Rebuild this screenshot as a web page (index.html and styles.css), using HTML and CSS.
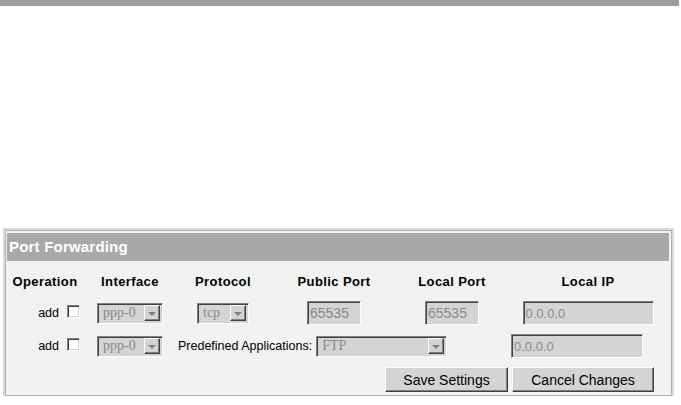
FILE: index.html
```html
<!DOCTYPE html>
<html lang="en">

<head>
  <meta charset="UTF-8" />
  <title>Port Forwarding</title>
  <link rel="stylesheet" href="styles.css">
</head>

<body>
  <div class="topbar"></div>
  <div class="panel">
    <header class="title">Port Forwarding</header>
    <div class="grid">
      <div class="th">Operation</div>
      <div class="th">Interface</div>
      <div class="th">Protocol</div>
      <div class="th">Public Port</div>
      <div class="th">Local Port</div>
      <div class="th">Local IP</div>

      <div class="op">add <span class="check"></span></div>
      <div class="select iface"><span class="val">ppp-0</span><span class="arrow"></span></div>
      <div class="select proto"><span class="val">tcp</span><span class="arrow"></span></div>
      <input class="field port" type="text" value="65535" disabled />
      <input class="field port" type="text" value="65535" disabled />
      <input class="field ip" type="text" value="0.0.0.0" disabled />

      <div class="op">add <span class="check"></span></div>
      <div class="select iface"><span class="val">ppp-0</span><span class="arrow"></span></div>
      <div class="predef">
        <span>Predefined Applications:</span>
        <div class="select app"><span class="val">FTP</span><span class="arrow"></span></div>
      </div>
      <input class="field ip second" type="text" value="0.0.0.0" disabled />
    </div>
    <footer class="actions">
      <button class="save">Save Settings</button>
      <button class="cancel">Cancel Changes</button>
    </footer>
  </div>
</body>

</html>
```

FILE: styles.css
```css
:root {
  /* bar colours */
  --bar-color: #9e9e9e;
  --title-bg: #a9a9a9;
  /* panel */
  --panel-bg: #f2f2f2;
  --panel-line: #b0b0b0;
  --panel-outer: #dadada;
  /* classic 3d controls */
  --face: #d4d4d4;
  --shadow: #808080;
  --dark: #404040;
  --disabled-text: #8a8a8a;
}

body {
  margin: 0;
  background: #fff;
  font-family: "Liberation Sans", Arial, sans-serif;
  color: #000;
}

.topbar {
  height: 6px;
  width: 679px;
  background: var(--bar-color);
}

/* panel */
.panel {
  box-sizing: border-box;
  width: 667px;
  margin: 224px 0 0 5px;
  padding: 2px 2px 3px 1px;
  background: var(--panel-bg);
  border: 1px solid var(--panel-line);
  box-shadow: 0 0 0 2px var(--panel-outer);
}

.panel>.title {
  height: 28px;
  line-height: 28px;
  padding-left: 2px;
  background: var(--title-bg);
  color: #fff;
  font-weight: bold;
  font-size: 15px;
  letter-spacing: 0.2px;
}

.grid {
  display: grid;
  grid-template-columns: 74px 96px 90px 132px 104px 168px;
  grid-template-rows: 18px 24px 24px;
  row-gap: 9px;
  margin-left: 1px;
  padding-top: 13px;
}

.th {
  justify-self: center;
  align-self: start;
  line-height: 16px;
  font-size: 13px;
  font-weight: bold;
  letter-spacing: 0.4px;
}

.op {
  justify-self: end;
  align-self: center;
  display: flex;
  align-items: center;
  gap: 8px;
  margin-right: 2px;
  font-size: 12.5px;
}

.op .check {
  margin-top: -3px;
}

.check {
  box-sizing: border-box;
  width: 13px;
  height: 13px;
  background: #fff;
  border: 1px solid;
  border-color: var(--shadow) #fff #fff var(--shadow);
  box-shadow: inset 1px 1px 0 var(--dark), inset -1px -1px 0 var(--face);
}

/* select boxes */
.select {
  box-sizing: border-box;
  justify-self: center;
  align-self: center;
  display: flex;
  align-items: center;
  height: 21px;
  padding: 2px;
  background: var(--face);
  border: 1px solid;
  border-color: var(--shadow) #fff #fff var(--shadow);
  box-shadow: inset 1px 1px 0 var(--dark);
}

.select .val {
  flex: 1;
  padding-left: 3px;
  font-family: "Liberation Serif", "Times New Roman", serif;
  font-size: 14px;
  color: var(--disabled-text);
}

.select .arrow {
  box-sizing: border-box;
  display: flex;
  align-items: center;
  justify-content: center;
  width: 16px;
  height: 16px;
  background: var(--face);
  border: 1px solid;
  border-color: #fff var(--dark) var(--dark) #fff;
  box-shadow: inset -1px -1px 0 var(--shadow);
}

.select .arrow::after {
  content: "";
  width: 0;
  height: 0;
  margin: 1px 0 0 -1px;
  border-left: 4px solid transparent;
  border-right: 4px solid transparent;
  border-top: 4px solid var(--shadow);
}

.select.iface {
  width: 66px;
}

.select.proto {
  width: 52px;
}

.select.app {
  width: 131px;
}

.predef {
  grid-column: 3 / 6;
  justify-self: start;
  align-self: center;
  display: flex;
  align-items: center;
  gap: 4px;
  font-size: 12.5px;
}

/* text inputs */
.field {
  box-sizing: border-box;
  justify-self: center;
  align-self: center;
  height: 24px;
  margin: 0;
  padding: 0 2px;
  background: var(--face);
  border: 1px solid;
  border-color: var(--shadow) #fff #fff var(--shadow);
  box-shadow: inset 1px 1px 0 var(--dark);
  font-family: "Liberation Sans", Arial, sans-serif;
  font-size: 13px;
  color: var(--disabled-text);
}

.field.port {
  width: 54px;
  font-size: 14px;
}

.field.ip {
  width: 131px;
}

.field.second {
  justify-self: start;
  margin-left: 7px;
  width: 132px;
}

/* buttons */
.actions {
  display: flex;
  justify-content: flex-end;
  gap: 4px;
  margin-top: 9px;
  padding-right: 15px;
}

.actions>button {
  box-sizing: border-box;
  height: 25px;
  padding: 0;
  background: var(--face);
  border: 1px solid;
  border-color: #fff var(--dark) var(--dark) #fff;
  box-shadow: inset -1px -1px 0 var(--shadow);
  font-family: "Liberation Sans", Arial, sans-serif;
  font-size: 14px;
  color: #000;
}

button.save {
  width: 123px;
}

button.cancel {
  width: 142px;
}
```
